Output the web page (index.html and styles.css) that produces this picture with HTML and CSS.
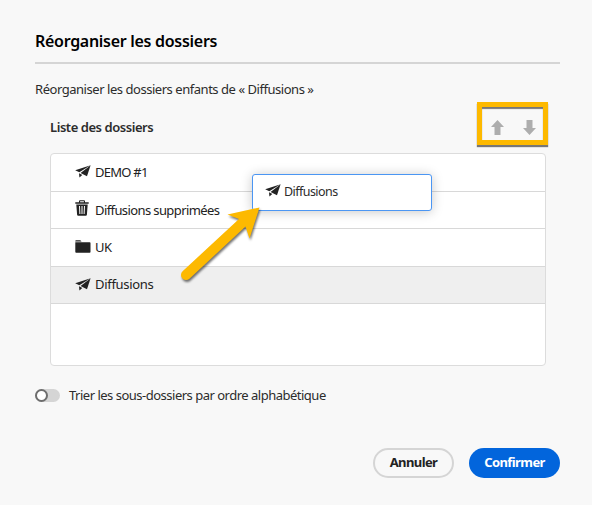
FILE: index.html
```html
<!DOCTYPE html>
<html lang="fr">
<head>
<meta charset="utf-8">
<title>Réorganiser les dossiers</title>
<link rel="stylesheet" href="styles.css">
</head>
<body>
<svg width="0" height="0" class="defs" aria-hidden="true">
  <symbol id="plane" viewBox="0 0 16 13"><path d="M.2 5.3 15.6.2 4.3 7.2Z"/><path d="M15.6.2 5.6 8 12 11.2Z"/><path d="M4 8.2 7.3 9.9 4.4 12.6Z"/></symbol>
  <symbol id="trash" viewBox="0 0 14 16"><path fill-rule="evenodd" d="M.3 2.2H4V1.1Q4 .2 5 .2h4q1 0 1 .9v1.1h3.7v1.5H.3ZM5.1 2.2h3.8V1.2H5.1ZM1.3 4.5h11.4l-.8 10.3q-.1 1-1.1 1H3.2q-1 0-1.1-1ZM4 6l.4 8h1L5 6Zm2.5 0v8h1V6ZM9 6l-.4 8h1l.4-8Z"/></symbol>
  <symbol id="folder" viewBox="0 0 16 13"><path d="M.3 1.6V1Q.3.3 1 .3h4.1q.5 0 .8.4l.6.9Z"/><path d="M.3 2.3h14.4q.8 0 .8.8v8.7q0 .9-.8.9H1.1q-.8 0-.8-.9Z"/></symbol>
</svg>
<main class="dialog">
  <h1 class="title">Réorganiser les dossiers</h1>
  <p class="intro">Réorganiser les dossiers enfants de « Diffusions »</p>
  <div class="list-head">
    <h2 class="list-title">Liste des dossiers</h2>
    <div class="order">
      <svg class="arrow" viewBox="0 0 13 15"><path d="M6.5 0 13 7H9.5v8h-6V7H0Z"/></svg>
      <svg class="arrow" viewBox="0 0 13 15"><path d="M6.5 15 13 8H9.5V0h-6v8H0Z"/></svg>
    </div>
  </div>
  <ul class="list">
    <li class="row"><svg class="icon plane"><use href="#plane"/></svg><span class="demo">DEMO #1</span></li>
    <li class="row"><svg class="icon trash"><use href="#trash"/></svg><span class="deleted">Diffusions supprimées</span></li>
    <li class="row"><svg class="icon folder"><use href="#folder"/></svg><span class="uk">UK</span></li>
    <li class="row selected"><svg class="icon plane"><use href="#plane"/></svg><span class="diff">Diffusions</span></li>
  </ul>
  <label class="sort"><span class="switch"></span><span class="sort-text">Trier les sous-dossiers par ordre alphabétique</span></label>
  <div class="actions">
    <button class="btn cancel">Annuler</button>
    <button class="btn confirm">Confirmer</button>
  </div>
</main>
<div class="drag"><svg class="icon plane"><use href="#plane"/></svg><span class="drag-text">Diffusions</span></div>
<svg class="pointer" viewBox="0 0 100 90"><path d="M4.6 70.2 61 18 49.5 13.5 81.5 6.5 71.5 37.5 67.5 25.5 11.4 77.8A5.1 5.1 0 0 1 4.6 70.2Z"/></svg>
</body>
</html>
```

FILE: styles.css
```css
*, *::before { box-sizing: border-box; }
body {
  margin: 0;
  height: 505px;
  overflow: hidden;
  position: relative;
  background: #f8f8f8;
  color: #2c2c2c;
  font: 13px/20px "Noto Sans", "Open Sans", sans-serif;
  white-space: nowrap;
}
h1, h2, p, ul { margin: 0; padding: 0; }
.defs { position: absolute; }
.dialog { padding: 29px 32px 0 35px; }
.title {
  height: 35px;
  border-bottom: 2px solid #d5d5d5;
  color: #000;
  font-size: 16px;
  font-weight: 600;
  line-height: 24px;
  letter-spacing: -.29px;
}
.intro { margin-top: 15px; letter-spacing: -.46px; }
.list-head {
  display: flex;
  justify-content: space-between;
  height: 44px;
  margin: 3px 12px 7px 15px;
}
.list-title { padding-top: 15px; font-size: 13px; font-weight: 600; letter-spacing: -.45px; }
.order {
  display: flex;
  justify-content: space-between;
  width: 71px;
  height: 43px;
  padding: 13px 7px 0 9px;
  border: 5px solid #fdb900;
  box-shadow: 0 2px 1px #777, inset 0 2px 1px #777;
}
.arrow { width: 13px; height: 15px; fill: #adadad; }
.list {
  height: 213px;
  width: 496px;
  margin-left: 15px;
  border: 1px solid #dcdcdc;
  border-radius: 4px;
  background: #fff;
  list-style: none;
}
.row {
  display: flex;
  align-items: center;
  height: 37.6px;
  padding-left: 24px;
  border-bottom: 1px solid #d8d8d8;
  color: #222;
}
.selected { background: #efefef; }
.icon { flex: none; width: 16px; height: 13px; margin: 0 4px 2px 0; fill: #222; }
.trash { width: 14px; height: 16px; margin: 0 6px 4px 0; }
.demo { letter-spacing: -.75px; }
.deleted { letter-spacing: -.6px; }
.uk { letter-spacing: -.4px; }
.diff { letter-spacing: -.3px; }
.selected .diff { margin-bottom: 2px; }
.sort { display: flex; align-items: center; height: 20px; margin-top: 19px; }
.switch {
  width: 25px;
  height: 13px;
  margin-right: 9px;
  border-radius: 7px;
  background: #d5d5d5;
}
.switch::before {
  content: "";
  display: block;
  width: 13px;
  height: 13px;
  border: 2px solid #6e6e6e;
  border-radius: 50%;
  background: #fff;
}
.sort-text { letter-spacing: -.5px; }
.actions { display: flex; justify-content: flex-end; gap: 15px; margin-top: 43px; }
.btn {
  height: 30px;
  padding: 0 0 2px;
  border-radius: 15px;
  font: 700 13px/20px "Noto Sans", sans-serif;
  letter-spacing: -.6px;
}
.cancel { width: 81px; border: 2px solid #d5d5d5; background: #f8f8f8; color: #222; }
.confirm { width: 91px; border: 0; background: #0265dc; color: #fff; }
.drag {
  position: absolute;
  left: 252px;
  top: 174px;
  display: flex;
  align-items: center;
  width: 180px;
  height: 37px;
  padding: 0 0 2px 12px;
  border: 1px solid #4b96f3;
  border-radius: 3px;
  background: #fff;
  box-shadow: 0 1px 12px rgba(0, 0, 0, .22);
}
.drag .icon { margin-right: 3px; margin-bottom: 3px; }
.drag-text { font-size: 12.5px; letter-spacing: -.55px; }
.pointer {
  position: absolute;
  left: 178px;
  top: 201px;
  width: 100px;
  height: 90px;
  fill: #fdb900;
  filter: drop-shadow(1px 2px 1px rgba(0, 0, 0, .55));
}
```
